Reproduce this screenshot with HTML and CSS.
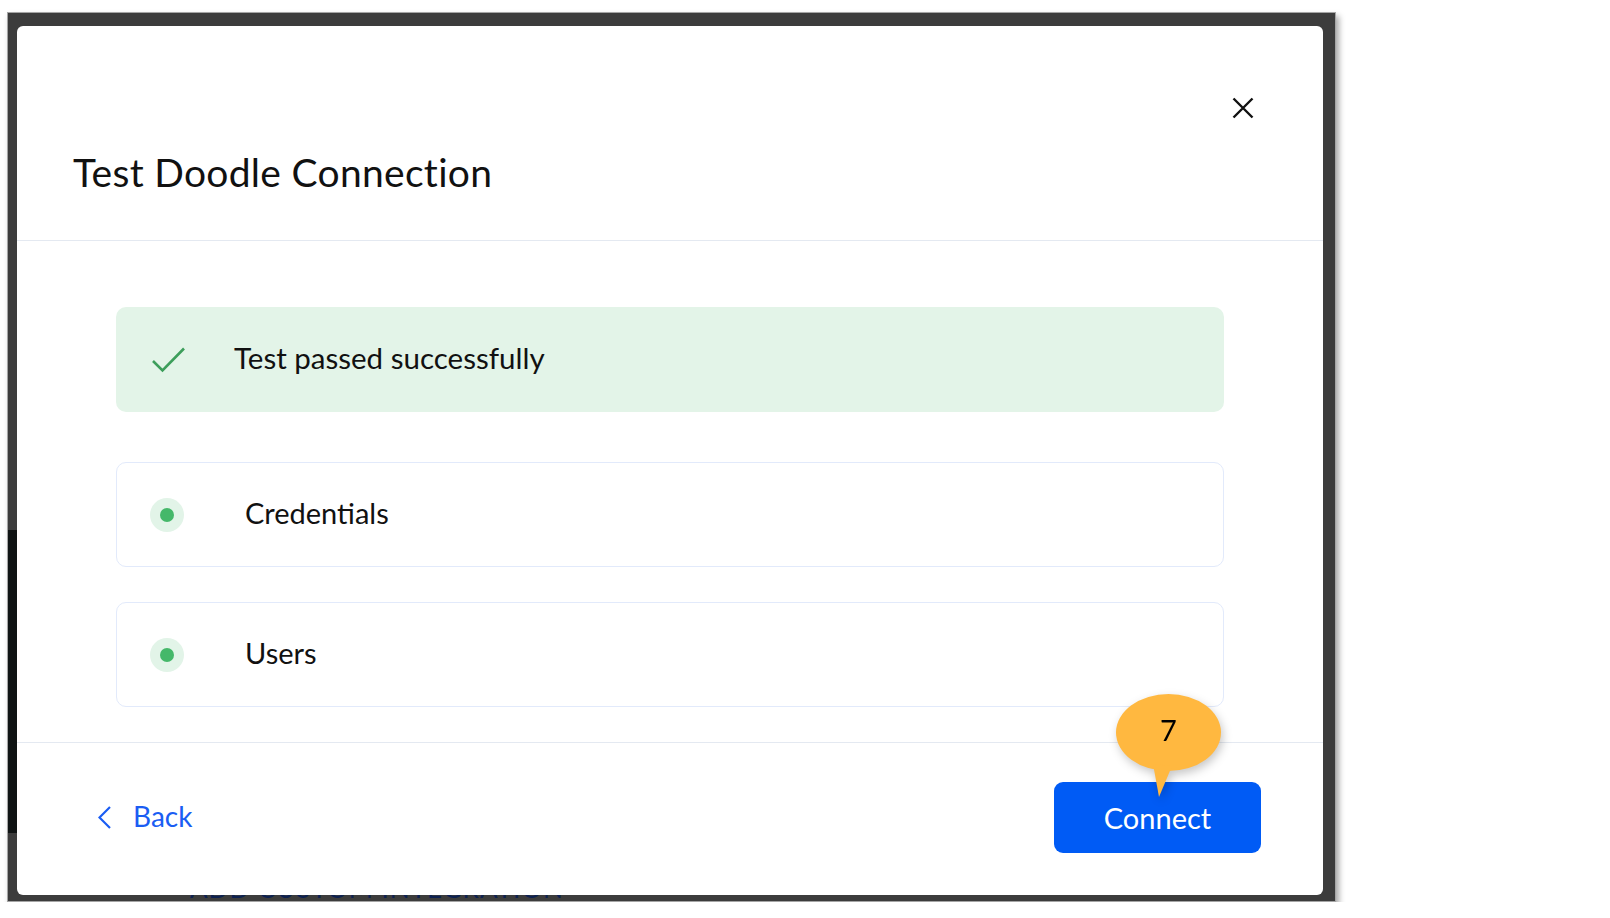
FILE: index.html
```html
<!DOCTYPE html>
<html lang="en">
<head>
  <meta charset="UTF-8">
  <meta name="viewport" content="width=device-width, initial-scale=1.0">
  <title>Test Doodle Connection</title>
  <link rel="stylesheet" href="styles.css">
</head>
<body>
  <div class="frame">
    <!-- page behind the dialog, only its edges show -->
    <div class="backdrop">
      <div class="backdrop-side"></div>
      <div class="backdrop-title">ADD CUSTOM INTEGRATION</div>
    </div>

    <div class="modal">
      <div class="modal-header">
        <button class="close-btn" aria-label="Close">
          <svg width="22" height="22" viewBox="0 0 22 22"><path d="M1.5 1.5 L20.5 20.5 M20.5 1.5 L1.5 20.5" /></svg>
        </button>
        <h1>Test Doodle Connection</h1>
      </div>

      <div class="modal-body">
        <div class="result">
          <svg class="check" width="33" height="26" viewBox="0 0 33 26"><polyline points="1,14 10.5,23.5 32,1.5" /></svg>
          <span>Test passed successfully</span>
        </div>
        <div class="check-item">
          <span class="status-dot"></span>
          <span>Credentials</span>
        </div>
        <div class="check-item">
          <span class="status-dot"></span>
          <span>Users</span>
        </div>
      </div>

      <div class="modal-footer">
        <a class="back-link" href="#">
          <svg width="13" height="23" viewBox="0 0 13 23"><polyline points="12,1 1.5,11.5 12,22" /></svg>
          <span>Back</span>
        </a>
        <div class="connect-wrap">
          <div class="step-bubble">
            <svg width="109" height="110" viewBox="0 0 109 110">
              <ellipse cx="54.5" cy="40.5" rx="52.5" ry="38.5" />
              <polygon points="39,72 58,74 45,105" />
            </svg>
            <span>7</span>
          </div>
          <button class="connect-btn">Connect</button>
        </div>
      </div>
    </div>
  </div>
</body>
</html>
```

FILE: styles.css
```css
body {
  margin: 0;
  background: #fff;
  font-family: Lato, "Open Sans", sans-serif;
  color: #111;
}
.frame {
  position: relative;
  box-sizing: border-box;
  width: 1329px;
  height: 890px;
  margin: 12px 0 0 7px;
  padding: 13px 12px 6px 9px;
  border: 1px solid #a5a5a5;
  background: #3c3c3c;
  box-shadow: 3px 4px 6px rgba(0, 0, 0, 0.35);
}
.backdrop {
  position: absolute;
  inset: 0;
  overflow: hidden;
}
.backdrop-side {
  position: absolute;
  left: 0;
  top: 517px;
  width: 9px;
  height: 303px;
  background: #0f1313;
}
.backdrop-title {
  position: absolute;
  left: 182px;
  top: 862px;
  font-size: 26px;
  line-height: 26px;
  letter-spacing: 1px;
  color: #0d2150;
}
.modal {
  position: relative;
  display: flex;
  flex-direction: column;
  height: 100%;
  background: #fff;
  border-radius: 6px;
}
.modal-header {
  box-sizing: border-box;
  height: 215px;
  padding: 0 56px;
  display: flex;
  flex-direction: column;
  border-bottom: 1px solid #e4e9f1;
}
.close-btn {
  align-self: flex-end;
  margin: 71px 13px 0 0;
  padding: 0;
  border: none;
  background: none;
  line-height: 0;
}
.close-btn path {
  stroke: #111;
  stroke-width: 2.4;
  fill: none;
}
h1 {
  margin: 30px 0 0;
  font-size: 39px;
  line-height: 46px;
  font-weight: 400;
  letter-spacing: 0.3px;
}
.modal-body {
  padding: 66px 99px 35px;
  display: flex;
  flex-direction: column;
  gap: 35px;
}
.result,
.check-item {
  box-sizing: border-box;
  height: 105px;
  display: flex;
  align-items: center;
  font-size: 29.5px;
  border-radius: 10px;
}
.result span,
.check-item span:last-child {
  margin-bottom: 5px;
}
.result {
  margin-bottom: 15px;
  padding-left: 36px;
  gap: 49px;
  background: #e3f4e8;
}
.check polyline {
  fill: none;
  stroke: #3d9e5b;
  stroke-width: 2.6;
}
.check-item {
  padding-left: 33px;
  gap: 61px;
  font-size: 29px;
  border: 1px solid #e2eafb;
}
.status-dot {
  width: 34px;
  height: 34px;
  border-radius: 50%;
  background: #e2f4e8;
  display: flex;
  align-items: center;
  justify-content: center;
}
.status-dot::after {
  content: "";
  width: 14px;
  height: 14px;
  border-radius: 50%;
  background: #45b86a;
}
.modal-footer {
  flex: 1;
  display: flex;
  align-items: center;
  justify-content: space-between;
  padding: 0 62px 3px 81px;
  border-top: 1px solid #e4e9f1;
}
.back-link {
  display: flex;
  align-items: center;
  gap: 22px;
  color: #1a5df3;
  font-size: 28px;
  text-decoration: none;
}
.back-link span {
  margin-bottom: 3px;
}
.back-link polyline {
  fill: none;
  stroke: #1a5df3;
  stroke-width: 2.2;
}
.connect-wrap {
  position: relative;
}
.connect-btn {
  width: 207px;
  height: 71px;
  border: none;
  border-radius: 9px;
  background: #005bf5;
  color: #fff;
  font-family: inherit;
  font-size: 29px;
}
.step-bubble {
  position: absolute;
  left: 60px;
  top: -90px;
  width: 109px;
  height: 110px;
  z-index: 1;
  filter: drop-shadow(2px 4px 5px rgba(0, 0, 0, 0.22));
}
.step-bubble svg {
  fill: #ffb840;
}
.step-bubble span {
  position: absolute;
  left: 0;
  right: 0;
  top: 21px;
  text-align: center;
  font-size: 29px;
  line-height: 34px;
  color: #000;
}
```
